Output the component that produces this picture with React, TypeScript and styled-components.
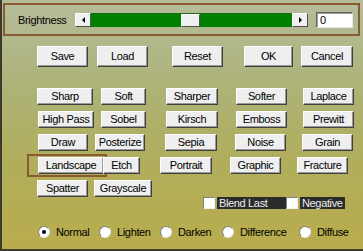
import React from 'react'
import styled, { createGlobalStyle } from 'styled-components'

const GlobalStyle = createGlobalStyle`
  html, body {
    margin: 0;
    padding: 0;
    background: #b4b478;
  }
  * {
    box-sizing: border-box;
  }
`

type Btn = { label: string; ml: number; w: number }

const filterRows: Btn[][] = [
  [
    { label: 'Sharp', ml: 35, w: 56 },
    { label: 'Soft', ml: 8, w: 45 },
    { label: 'Sharper', ml: 20, w: 52 },
    { label: 'Softer', ml: 18, w: 51 },
    { label: 'Laplace', ml: 16, w: 51 },
  ],
  [
    { label: 'High Pass', ml: 36, w: 56 },
    { label: 'Sobel', ml: 7, w: 45 },
    { label: 'Kirsch', ml: 20, w: 52 },
    { label: 'Emboss', ml: 18, w: 51 },
    { label: 'Prewitt', ml: 16, w: 51 },
  ],
  [
    { label: 'Draw', ml: 36, w: 50 },
    { label: 'Posterize', ml: 7, w: 50 },
    { label: 'Sepia', ml: 20, w: 52 },
    { label: 'Noise', ml: 18, w: 51 },
    { label: 'Grain', ml: 16, w: 51 },
  ],
  [
    { label: 'Landscape', ml: 36, w: 66 },
    { label: 'Etch', ml: 5, w: 37 },
    { label: 'Portrait', ml: 20, w: 52 },
    { label: 'Graphic', ml: 18, w: 51 },
    { label: 'Fracture', ml: 16, w: 51 },
  ],
  [
    { label: 'Spatter', ml: 35, w: 51 },
    { label: 'Grayscale', ml: 6, w: 58 },
  ],
]

const actions: Btn[] = [
  { label: 'Save', ml: 35, w: 51 },
  { label: 'Load', ml: 9, w: 51 },
  { label: 'Reset', ml: 24, w: 51 },
  { label: 'OK', ml: 21, w: 49 },
  { label: 'Cancel', ml: 8, w: 52 },
]

const modes = [
  { label: 'Normal', w: 61, checked: true },
  { label: 'Lighten', w: 61, checked: false },
  { label: 'Darken', w: 62, checked: false },
  { label: 'Difference', w: 77, checked: false },
  { label: 'Diffuse', w: 60, checked: false },
]

const App: React.FC = () => {
  return (
    <>
      <GlobalStyle />
      <StyledWindow>
        <StyledGroup>
          <StyledGroupLabel>Brightness</StyledGroupLabel>
          <StyledScrollbar>
            <StyledArrow $dir="left" />
            <StyledTrack>
              <StyledThumb />
            </StyledTrack>
            <StyledArrow $dir="right" />
          </StyledScrollbar>
          <StyledEdit>0</StyledEdit>
        </StyledGroup>

        <StyledActionRow>
          {actions.map((b) => (
            <StyledButton key={b.label} $ml={b.ml} $w={b.w} $h={21}>
              {b.label}
            </StyledButton>
          ))}
        </StyledActionRow>

        <StyledFilters>
          {filterRows.map((row, i) => (
            <StyledFilterRow key={i}>
              {row.map((b) =>
                b.label === 'Landscape' ? (
                  <StyledHighlight key={b.label} $ml={b.ml - 11}>
                    <StyledButton $ml={0} $w={b.w} $h={17}>
                      {b.label}
                    </StyledButton>
                  </StyledHighlight>
                ) : (
                  <StyledButton key={b.label} $ml={b.label === 'Etch' ? b.ml - 9 : b.ml} $w={b.w} $h={17}>
                    {b.label}
                  </StyledButton>
                )
              )}
            </StyledFilterRow>
          ))}
        </StyledFilters>

        <StyledCheckRow>
          <StyledCheckBox />
          <StyledCheckLabel $w={69}>Blend Last</StyledCheckLabel>
          <StyledCheckBox />
          <StyledCheckLabel $w={45}>Negative</StyledCheckLabel>
        </StyledCheckRow>

        <StyledRadioRow>
          {modes.map((m) => (
            <StyledRadioItem key={m.label} $w={m.w}>
              <StyledRadio $checked={m.checked} />
              <span>{m.label}</span>
            </StyledRadioItem>
          ))}
        </StyledRadioRow>
      </StyledWindow>
    </>
  )
}

const StyledWindow = styled.div`
  width: 363px;
  height: 251px;
  overflow: hidden;
  display: flex;
  flex-direction: column;
  border-left: 2px solid #3a3a2c;
  border-bottom: 2px solid #3a3a2c;
  background: linear-gradient(to bottom, #b5bd9b 0%, #adb277 35%, #b0ae5c 65%, #b9ac4c 100%);
  font-family: 'Liberation Sans', Arial, sans-serif;
  font-size: 11px;
  letter-spacing: -0.35px;
  color: #000;
`

const StyledGroup = styled.div`
  margin: 3px 0 0 1px;
  width: 357px;
  height: 33px;
  border: 2px solid #8a5a30;
  display: flex;
  align-items: center;
`

const StyledGroupLabel = styled.div`
  width: 70px;
  padding-left: 13px;
`

const StyledScrollbar = styled.div`
  width: 233px;
  height: 14px;
  display: flex;
`

const StyledArrow = styled.div<{ $dir: 'left' | 'right' }>`
  width: 16px;
  height: 14px;
  background: #f0f0f0;
  border: 1px solid;
  border-color: #fff #505050 #505050 #fff;
  display: flex;
  align-items: center;
  justify-content: center;

  &::after {
    content: '';
    width: 0;
    height: 0;
    border-top: 3px solid transparent;
    border-bottom: 3px solid transparent;
    ${(p) => (p.$dir === 'left' ? 'border-right: 3px solid #000;' : 'border-left: 3px solid #000;')}
  }
`

const StyledTrack = styled.div`
  flex: 1;
  height: 14px;
  background: #008000;
  border-top: 1px solid #1a6a1a;
  display: flex;
  align-items: center;
  padding-left: 90px;
`

const StyledThumb = styled.div`
  width: 19px;
  height: 13px;
  background: #f0f0f0;
  border: 1px solid;
  border-color: #fff #505050 #505050 #fff;
`

const StyledEdit = styled.div`
  margin-left: 8px;
  width: 37px;
  height: 16px;
  background: #fff;
  border: 1px solid;
  border-color: #606060 #e8e8e8 #e8e8e8 #606060;
  box-shadow: inset 1px 1px 0 #a0a0a0;
  padding: 1px 0 0 3px;
  line-height: 12px;
`

const StyledActionRow = styled.div`
  display: flex;
  margin-top: 10px;
`

const StyledButton = styled.button<{ $ml: number; $w: number; $h: number }>`
  margin: 0 0 0 ${(p) => p.$ml}px;
  width: ${(p) => p.$w}px;
  height: ${(p) => p.$h}px;
  padding: 0;
  flex-shrink: 0;
  background: #efefef;
  border: 1px solid;
  border-color: #ffffff #404040 #404040 #ffffff;
  box-shadow: inset -1px -1px 0 #9a9a9a;
  font-family: 'Liberation Sans', Arial, sans-serif;
  font-size: 11px;
  letter-spacing: -0.35px;
  color: #000;
  line-height: 1;
`

const StyledFilters = styled.div`
  margin-top: 21px;
  display: flex;
  flex-direction: column;
  gap: 6px;
`

const StyledFilterRow = styled.div`
  display: flex;
  align-items: center;
  height: 17px;
`

const StyledHighlight = styled.div<{ $ml: number }>`
  margin-left: ${(p) => p.$ml}px;
  border: 2px solid #8a5a30;
  padding: 2px 2px 2px 9px;
  width: 80px;
  height: 23px;
  display: flex;
  align-items: center;
  flex-shrink: 0;
`

const StyledCheckRow = styled.div`
  display: flex;
  align-items: center;
  margin-top: 0;
  padding-left: 201px;
`

const StyledCheckBox = styled.div`
  width: 12px;
  height: 12px;
  background: #fff;
  border: 1px solid;
  border-color: #808080 #f0f0f0 #f0f0f0 #808080;
  flex-shrink: 0;
`

const StyledCheckLabel = styled.div<{ $w: number }>`
  margin-left: 2px;
  width: ${(p) => p.$w}px;
  height: 12px;
  background: #2b2b2b;
  color: #ececec;
  padding-left: 2px;
  line-height: 12px;
  white-space: nowrap;
`

const StyledRadioRow = styled.div`
  display: flex;
  align-items: center;
  margin-top: 17px;
  padding-left: 36px;
`

const StyledRadioItem = styled.label<{ $w: number }>`
  width: ${(p) => p.$w}px;
  flex-shrink: 0;
  display: flex;
  align-items: center;
  gap: 6px;
`

const StyledRadio = styled.span<{ $checked: boolean }>`
  width: 12px;
  height: 12px;
  border-radius: 50%;
  background: #fff;
  border: 1px solid;
  border-color: #808080 #e8e8e8 #e8e8e8 #808080;
  display: flex;
  align-items: center;
  justify-content: center;
  flex-shrink: 0;

  &::after {
    content: '';
    width: 4px;
    height: 4px;
    border-radius: 50%;
    background: ${(p) => (p.$checked ? '#000' : 'transparent')};
  }
`

export default App
